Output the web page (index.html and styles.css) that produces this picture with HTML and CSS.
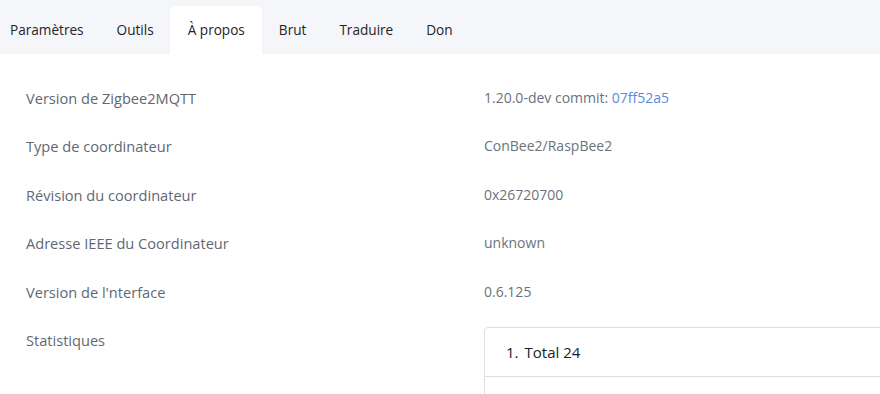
FILE: index.html
```html
<!DOCTYPE html>
<html lang="fr">
<head>
  <meta charset="UTF-8" />
  <title>Zigbee2MQTT - À propos</title>
  <link rel="stylesheet" href="styles.css">
</head>
<body>
  <ul class="tabs">
    <li class="tab">Paramètres</li>
    <li class="tab">Outils</li>
    <li class="tab active">À propos</li>
    <li class="tab">Brut</li>
    <li class="tab">Traduire</li>
    <li class="tab">Don</li>
  </ul>

  <div class="about">
    <div class="row">
      <div class="label">Version de Zigbee2MQTT</div>
      <div class="value">1.20.0-dev commit: <a href="#">07ff52a5</a></div>
    </div>
    <div class="row">
      <div class="label">Type de coordinateur</div>
      <div class="value">ConBee2/RaspBee2</div>
    </div>
    <div class="row">
      <div class="label">Révision du coordinateur</div>
      <div class="value">0x26720700</div>
    </div>
    <div class="row">
      <div class="label">Adresse IEEE du Coordinateur</div>
      <div class="value">unknown</div>
    </div>
    <div class="row">
      <div class="label">Version de l'nterface</div>
      <div class="value">0.6.125</div>
    </div>
    <div class="row">
      <div class="label">Statistiques</div>
      <div class="value">
        <ol class="stats">
          <li class="stats-item"><span class="num">1.</span>Total 24</li>
          <li class="stats-item"></li>
        </ol>
      </div>
    </div>
  </div>
</body>
</html>
```

FILE: styles.css
```css
body {
  margin: 0;
  padding: 0;
  background: #fff;
  font-family: 'Open Sans', 'Noto Sans', sans-serif;
  font-size: 14px;
  color: #212529;
  overflow: hidden;
}

.tabs {
  display: flex;
  margin: 0;
  padding: 6px 0 0 0;
  list-style: none;
  background: #f5f6fa;
}

.tab {
  padding: 0 16.5px;
  height: 48px;
  line-height: 48px;
  font-size: 13.6px;
  color: #1f2328;
  border-radius: 5px 5px 0 0;
}

.tab:first-child {
  padding-left: 10px;
}

.tab.active {
  background: #fff;
  padding: 0 17.5px;
}

.about {
  padding: 20px 0 0 26px;
}

.row {
  display: grid;
  grid-template-columns: 458px 1fr;
}

.label,
.value {
  padding: 12px 0;
  line-height: 24.4px;
  color: #6a737d;
}

.label {
  font-weight: 500;
  font-size: 14.6px;
  color: #5f6872;
}

.value a {
  color: #5b8bd9;
  text-decoration: none;
}

.stats {
  list-style: none;
  margin: -1px -20px 0 0;
  padding: 0;
  border: 1px solid #dedede;
  border-radius: 4px;
}

.stats-item {
  padding: 12px 21px;
  height: 24px;
  line-height: 24px;
  color: #1a1d21;
  font-size: 15px;
  font-weight: 500;
}

.stats-item + .stats-item {
  border-top: 1px solid #dedede;
}

.num {
  font-weight: 400;
  margin-right: 6px;
}
```
